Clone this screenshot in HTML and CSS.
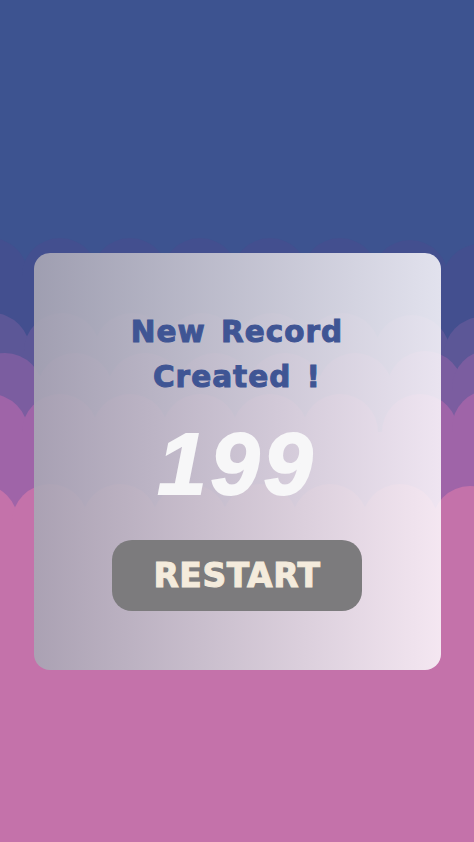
FILE: index.html
```html
<!DOCTYPE html>
<html lang="en">
<head>
  <meta charset="UTF-8">
  <title>New Record</title>
  <link rel="stylesheet" href="styles.css">
</head>
<body>

  <div class="tela">
    <!-- fundo com nuvens -->
    <svg class="fundo" width="474" height="842" viewBox="0 0 474 842">
      <rect width="474" height="842" fill="#3d5390"/>
      <g fill="#434f8f">
        <circle cx="-10" cy="276" r="38"/><circle cx="60" cy="276" r="38"/>
        <circle cx="130" cy="276" r="38"/><circle cx="200" cy="276" r="38"/>
        <circle cx="270" cy="276" r="38"/><circle cx="340" cy="276" r="38"/>
        <circle cx="410" cy="278" r="38"/><circle cx="480" cy="282" r="38"/>
        <rect y="276" width="474" height="566"/>
      </g>
      <g fill="#5c5797">
        <circle cx="-8" cy="351" r="38"/><circle cx="62" cy="351" r="38"/>
        <circle cx="132" cy="351" r="38"/><circle cx="202" cy="351" r="38"/>
        <circle cx="272" cy="351" r="38"/><circle cx="342" cy="351" r="38"/>
        <circle cx="412" cy="353" r="38"/><circle cx="482" cy="355" r="38"/>
        <rect y="351" width="474" height="491"/>
      </g>
      <g fill="#7b5da0">
        <circle cx="5" cy="391" r="38"/><circle cx="75" cy="391" r="38"/>
        <circle cx="145" cy="391" r="38"/><circle cx="215" cy="391" r="38"/>
        <circle cx="285" cy="391" r="38"/><circle cx="355" cy="391" r="38"/>
        <circle cx="425" cy="389" r="38"/><circle cx="490" cy="388" r="38"/>
        <rect y="391" width="474" height="451"/>
      </g>
      <g fill="#9f64a8">
        <circle cx="-10" cy="432" r="38"/><circle cx="60" cy="432" r="38"/>
        <circle cx="130" cy="432" r="38"/><circle cx="200" cy="432" r="38"/>
        <circle cx="270" cy="432" r="38"/><circle cx="340" cy="432" r="38"/>
        <circle cx="420" cy="432" r="38"/><circle cx="490" cy="428" r="38"/>
        <rect y="432" width="474" height="410"/>
      </g>
      <g fill="#c472aa">
        <circle cx="-20" cy="522" r="38"/><circle cx="50" cy="522" r="38"/>
        <circle cx="120" cy="522" r="38"/><circle cx="190" cy="522" r="38"/>
        <circle cx="260" cy="522" r="38"/><circle cx="330" cy="522" r="38"/>
        <circle cx="400" cy="522" r="38"/><circle cx="470" cy="524" r="38"/>
        <rect y="522" width="474" height="320"/>
      </g>
    </svg>

    <div class="conteudo">
      <div class="cartao">
        <h1 class="titulo">New Record<br>Created !</h1>
        <p class="pontos">199</p>
        <button class="botao">RESTART</button>
      </div>
    </div>
  </div>

</body>
</html>
```

FILE: styles.css
```css
* {
  box-sizing: border-box;
  margin: 0;
  padding: 0;
}

body {
  background-color: #3d5390;
  overflow: hidden;
}

.tela {
  display: grid;
  width: 474px;
  height: 842px;
}

.fundo,
.conteudo {
  grid-area: 1 / 1;
}

.fundo {
  display: block;
}

.conteudo {
  z-index: 1;
  padding-top: 253px;
}

.cartao {
  width: 407px;
  height: 417px;
  margin: 0 auto;
  padding-top: 57px;
  border-radius: 16px;
  background: linear-gradient(to right, rgba(168, 166, 180, 0.91), rgba(252, 250, 253, 0.86));
  display: flex;
  flex-direction: column;
  align-items: center;
}

.titulo {
  font-family: "DejaVu Sans", sans-serif;
  font-weight: bold;
  font-size: 29.5px;
  line-height: 45px;
  letter-spacing: 1px;
  word-spacing: 4px;
  color: #3f5594;
  -webkit-text-stroke: 1px #3f5594;
  text-align: center;
}

.pontos {
  margin-top: 20px;
  font-family: "Liberation Sans", Arial, sans-serif;
  font-weight: bold;
  font-style: italic;
  font-size: 88px;
  line-height: 88px;
  letter-spacing: 4px;
  color: #f7f7f8;
  -webkit-text-stroke: 2px #f7f7f8;
}

.botao {
  margin-top: 32px;
  width: 250px;
  height: 71px;
  border: none;
  border-radius: 20px;
  background-color: #7c7b7d;
  color: #f4ebdc;
  font-family: "DejaVu Sans", sans-serif;
  font-weight: bold;
  font-size: 33px;
  letter-spacing: 0.5px;
  -webkit-text-stroke: 1px #f4ebdc;
  display: flex;
  align-items: center;
  justify-content: center;
}
```
